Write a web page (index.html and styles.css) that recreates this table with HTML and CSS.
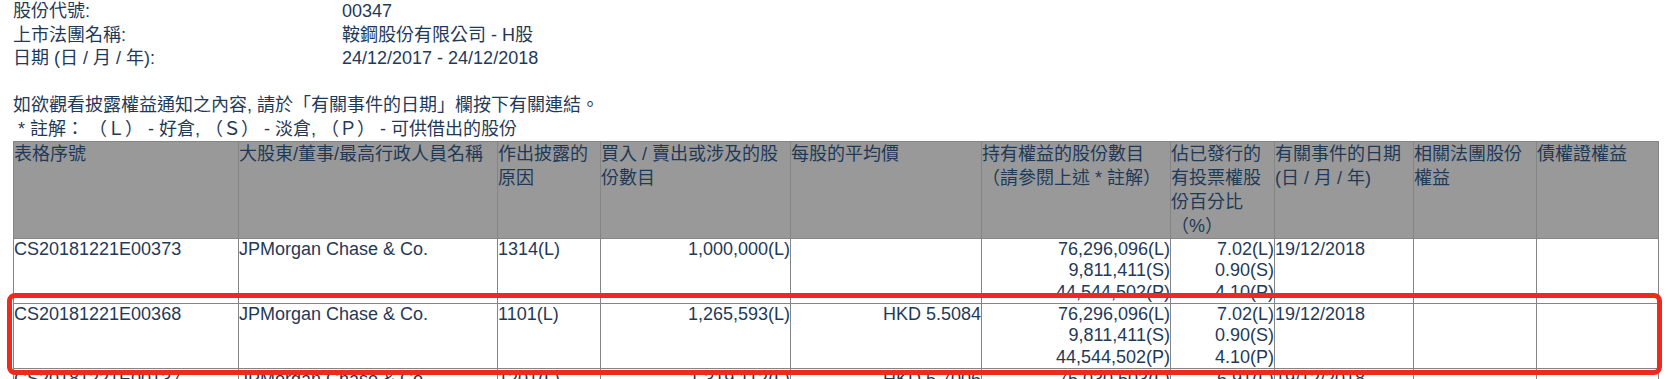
FILE: index.html
```html
<!DOCTYPE html>
<html lang="zh-Hant">
<head>
<meta charset="utf-8">
<title>披露權益</title>
<link rel="stylesheet" href="styles.css">
</head>
<body>
<div class="page">
  <div class="info">
    <div class="info-label">股份代號:</div><div class="info-value">00347</div>
    <div class="info-label">上市法團名稱:</div><div class="info-value">鞍鋼股份有限公司 - H股</div>
    <div class="info-label">日期 (日 / 月 / 年):</div><div class="info-value">24/12/2017 - 24/12/2018</div>
  </div>
  <div class="spacer"></div>
  <p class="notice">如欲觀看披露權益通知之內容, 請於「有關事件的日期」欄按下有關連結。</p>
  <p class="notice">&nbsp;* 註解： （Ｌ） - 好倉, （Ｓ） - 淡倉, （Ｐ） - 可供借出的股份</p>
  <table class="grid">
    <colgroup>
      <col class="c1"><col class="c2"><col class="c3"><col class="c4"><col class="c5">
      <col class="c6"><col class="c7"><col class="c8"><col class="c9"><col class="c10">
    </colgroup>
    <thead>
      <tr>
        <th>表格序號</th>
        <th>大股東/董事/最高行政人員名稱</th>
        <th>作出披露的<br>原因</th>
        <th>買入 / 賣出或涉及的股<br>份數目</th>
        <th>每股的平均價</th>
        <th>持有權益的股份數目<br>（請參閱上述 * 註解）</th>
        <th>佔已發行的<br>有投票權股<br>份百分比<br>（%）</th>
        <th>有關事件的日期<br>(日 / 月 / 年)</th>
        <th>相關法團股份<br>權益</th>
        <th>債權證權益</th>
      </tr>
    </thead>
    <tbody>
      <tr>
        <td>CS20181221E00373</td>
        <td>JPMorgan Chase &amp; Co.</td>
        <td>1314(L)</td>
        <td class="num">1,000,000(L)</td>
        <td class="num"></td>
        <td class="num">76,296,096(L)<br>9,811,411(S)<br>44,544,502(P)</td>
        <td class="num">7.02(L)<br>0.90(S)<br>4.10(P)</td>
        <td>19/12/2018</td>
        <td></td>
        <td></td>
      </tr>
      <tr>
        <td>CS20181221E00368</td>
        <td>JPMorgan Chase &amp; Co.</td>
        <td>1101(L)</td>
        <td class="num">1,265,593(L)</td>
        <td class="num">HKD 5.5084</td>
        <td class="num">76,296,096(L)<br>9,811,411(S)<br>44,544,502(P)</td>
        <td class="num">7.02(L)<br>0.90(S)<br>4.10(P)</td>
        <td>19/12/2018</td>
        <td></td>
        <td></td>
      </tr>
      <tr>
        <td>CS20181221E00137</td>
        <td>JPMorgan Chase &amp; Co.</td>
        <td>1201(L)</td>
        <td class="num">1,319,112(L)</td>
        <td class="num">HKD 5.7006</td>
        <td class="num">75,030,503(L)<br>9,811,411(S)<br>44,544,502(P)</td>
        <td class="num">6.91(L)<br>0.90(S)<br>4.10(P)</td>
        <td>19/12/2018</td>
        <td></td>
        <td></td>
      </tr>
    </tbody>
  </table>
  <div class="highlight"></div>
</div>
</body>
</html>
```
FILE: styles.css
```css
html, body {
  margin: 0;
  padding: 0;
  background: #ffffff;
  overflow: hidden;
}
.page {
  position: relative;
  height: 379px;
  overflow: hidden;
  padding: 0 0 0 13px;
  font-family: "Liberation Sans", Arial, "Noto Sans CJK TC", sans-serif;
  font-size: 18px;
  line-height: 23.5px;
  color: #1f3a58;
}
.info {
  display: grid;
  grid-template-columns: 329px auto;
}
.spacer {
  height: 23.5px;
}
.notice {
  margin: 0;
  white-space: nowrap;
}
.grid {
  border-collapse: collapse;
  table-layout: fixed;
  width: 1645px;
}
.c1 { width: 225px; }
.c2 { width: 259px; }
.c3 { width: 103px; }
.c4 { width: 190px; }
.c5 { width: 191px; }
.c6 { width: 189px; }
.c7 { width: 104px; }
.c8 { width: 139px; }
.c9 { width: 123px; }
.c10 { width: 122px; }
.grid th,
.grid td {
  border: 1px solid #858585;
  padding: 0;
  vertical-align: top;
  text-align: left;
  white-space: nowrap;
  overflow: hidden;
}
.grid th {
  background: #999999;
  font-weight: normal;
  height: 96px;
  line-height: 24px;
}
.grid td {
  height: 64px;
  line-height: 21.33px;
}
.grid td.num {
  text-align: right;
}
.highlight {
  position: absolute;
  left: 7px;
  top: 293px;
  width: 1655px;
  height: 82px;
  box-sizing: border-box;
  border: 5px solid #ee2a1f;
  border-radius: 8px;
}
```
